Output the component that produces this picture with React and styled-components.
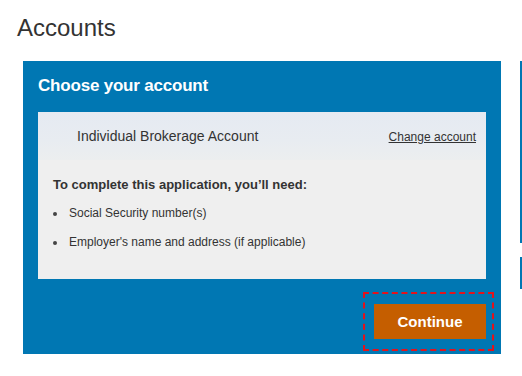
import React from 'react'
import styled, { createGlobalStyle } from 'styled-components'

const GlobalStyle = createGlobalStyle`
  html, body {
    margin: 0;
    padding: 0;
    background: #fff;
    overflow: hidden;
  }
  body {
    font-family: "Liberation Sans", Arial, sans-serif;
    color: #333;
  }
`

const Page = styled.div`
  width: 522px;
  height: 376px;
  overflow: hidden;
  padding-top: 16px;
  box-sizing: border-box;
`

const PageTitle = styled.h1`
  margin: 0 0 21px 17px;
  font-size: 24px;
  line-height: 24px;
  font-weight: normal;
  color: #333;
`

const Row = styled.div`
  display: flex;
  align-items: flex-start;
  margin-left: 23px;
`

const Panel = styled.section`
  flex: 0 0 478px;
  box-sizing: border-box;
  background: #0077b3;
  padding: 15px;
  display: flex;
  flex-direction: column;
`

const PanelTitle = styled.h2`
  margin: 0 0 16px;
  font-size: 17px;
  line-height: 20px;
  letter-spacing: -0.2px;
  font-weight: bold;
  color: #fff;
`

const Card = styled.div`
  background: #efefef;
`

const CardHeader = styled.div`
  display: flex;
  justify-content: space-between;
  align-items: baseline;
  height: 48px;
  box-sizing: border-box;
  padding: 15px 10px 15px 39px;
  background: linear-gradient(180deg, #e5eaf2 0%, #e8ecf1 60%, #eceeef 100%);
`

const AccountName = styled.span`
  font-size: 14px;
  line-height: 18px;
  color: #333;
`

const ChangeLink = styled.a`
  font-size: 12px;
  line-height: 18px;
  color: #333;
  text-decoration: underline;
  cursor: pointer;
`

const CardBody = styled.div`
  padding: 17px 15px 29px;
`

const NeedTitle = styled.h3`
  margin: 0 0 12px;
  font-size: 13px;
  line-height: 16px;
  font-weight: bold;
  color: #333;
`

const List = styled.ul`
  margin: 0;
  padding: 0;
  list-style: none;
  display: flex;
  flex-direction: column;
  gap: 13px;
`

const Item = styled.li`
  display: flex;
  align-items: center;
  font-size: 12px;
  line-height: 16px;
  color: #333;
`

const Dot = styled.span`
  width: 4px;
  height: 4px;
  border-radius: 50%;
  background: #444;
  margin: 1px 12px 0 0;
  flex: none;
`

const Actions = styled.div`
  display: flex;
  justify-content: flex-end;
  margin-top: 25px;
`

const Highlight = styled.div`
  position: relative;

  &::after {
    content: '';
    position: absolute;
    top: -12px;
    left: -11px;
    right: -8px;
    bottom: -12px;
    border: 2px dashed #e3131c;
    pointer-events: none;
  }
`

const ContinueButton = styled.button`
  display: block;
  width: 112px;
  height: 35px;
  border: none;
  border-radius: 0;
  background: #c55e00;
  color: #fff;
  font-family: "Liberation Sans", Arial, sans-serif;
  font-size: 15px;
  font-weight: bold;
  cursor: pointer;
`

const Side = styled.div`
  flex: 0 0 200px;
  margin-left: 19px;
  display: flex;
  flex-direction: column;
  gap: 14px;
`

const SideCard = styled.div`
  height: ${p => p.$h}px;
  border-left: 2px solid #0077b3;
`

export default function App() {
  return (
    <>
      <GlobalStyle />
      <Page>
        <PageTitle>Accounts</PageTitle>
        <Row>
          <Panel>
            <PanelTitle>Choose your account</PanelTitle>
            <Card>
              <CardHeader>
                <AccountName>Individual Brokerage Account</AccountName>
                <ChangeLink>Change account</ChangeLink>
              </CardHeader>
              <CardBody>
                <NeedTitle>To complete this application, you’ll need:</NeedTitle>
                <List>
                  <Item><Dot />Social Security number(s)</Item>
                  <Item><Dot />Employer's name and address (if applicable)</Item>
                </List>
              </CardBody>
            </Card>
            <Actions>
              <Highlight>
                <ContinueButton>Continue</ContinueButton>
              </Highlight>
            </Actions>
          </Panel>
          <Side>
            <SideCard $h={182} />
            <SideCard $h={32} />
          </Side>
        </Row>
      </Page>
    </>
  )
}
